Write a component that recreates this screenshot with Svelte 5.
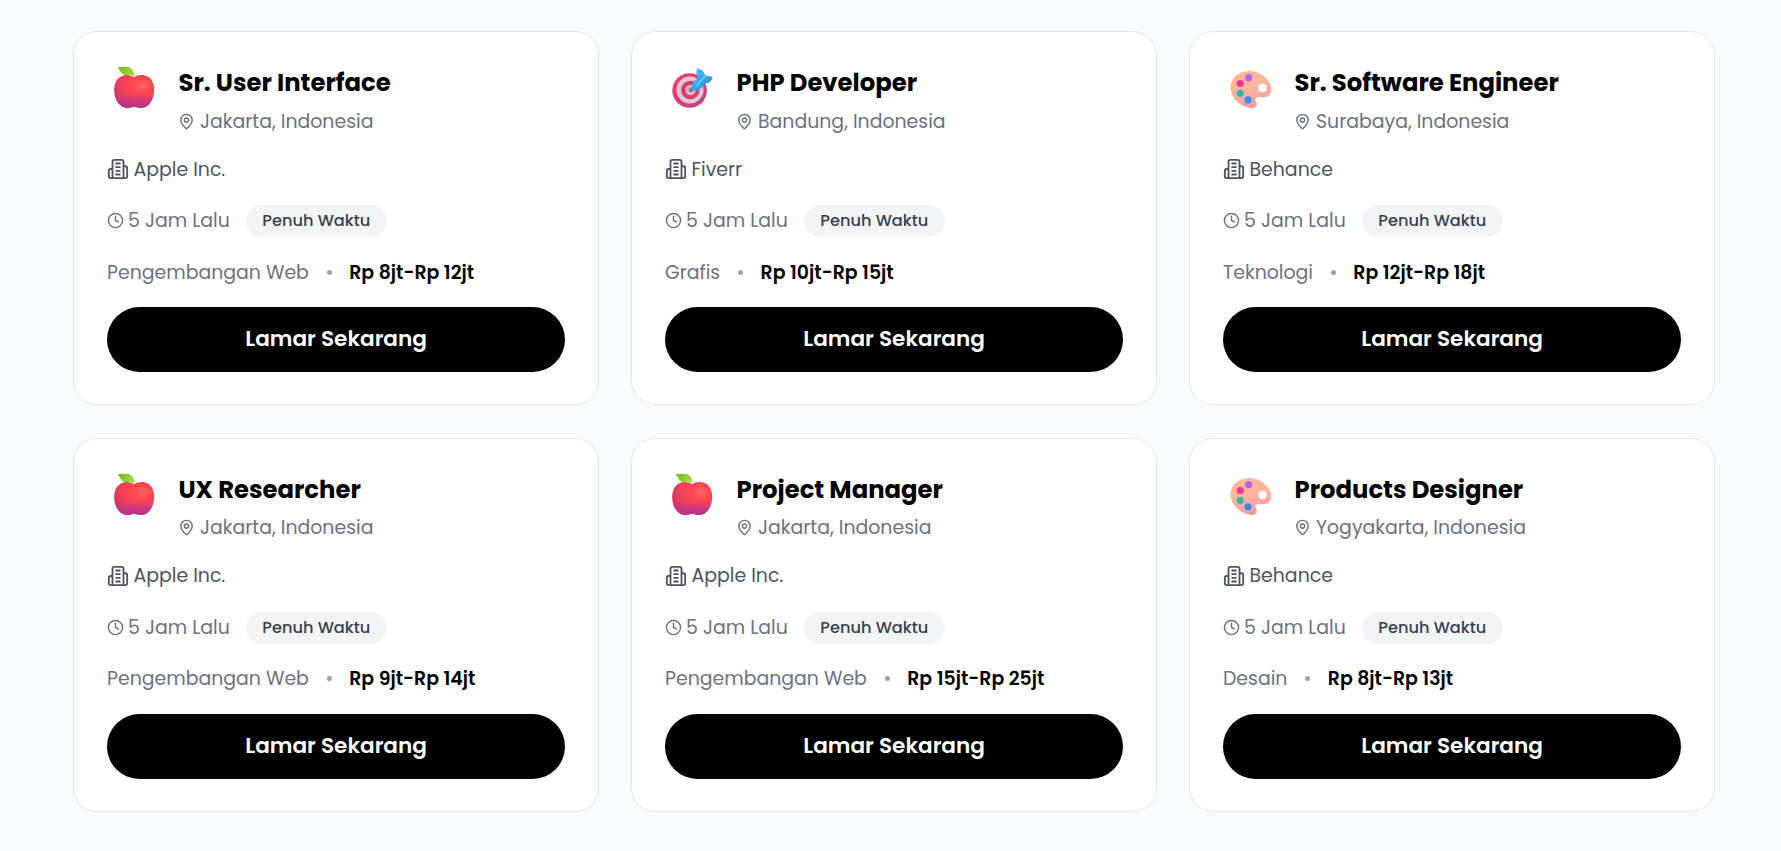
<script>
  const jobs = [
    { title: 'Sr. User Interface', place: 'Jakarta, Indonesia', company: 'Apple Inc.', logo: 'apple', category: 'Pengembangan Web', pay: 'Rp 8jt-Rp 12jt' },
    { title: 'PHP Developer', place: 'Bandung, Indonesia', company: 'Fiverr', logo: 'target', category: 'Grafis', pay: 'Rp 10jt-Rp 15jt' },
    { title: 'Sr. Software Engineer', place: 'Surabaya, Indonesia', company: 'Behance', logo: 'palette', category: 'Teknologi', pay: 'Rp 12jt-Rp 18jt' },
    { title: 'UX Researcher', place: 'Jakarta, Indonesia', company: 'Apple Inc.', logo: 'apple', category: 'Pengembangan Web', pay: 'Rp 9jt-Rp 14jt' },
    { title: 'Project Manager', place: 'Jakarta, Indonesia', company: 'Apple Inc.', logo: 'apple', category: 'Pengembangan Web', pay: 'Rp 15jt-Rp 25jt' },
    { title: 'Products Designer', place: 'Yogyakarta, Indonesia', company: 'Behance', logo: 'palette', category: 'Desain', pay: 'Rp 8jt-Rp 13jt' }
  ];
  const appleShape = 'M27 14.2C31 11.3 37 11.2 41 13.6C45.5 16.4 47.3 22 47.2 27C47.1 36.5 42 45 34 45C31 45 29.6 43.7 27.3 43.7C25 43.7 23.5 45 20.5 45C12.5 45 7.4 36.5 7.2 28C7.1 21 9.3 16 13.5 13.7C17.5 11.3 23 11.5 27 14.2Z';
</script>

<svg class="defs" width="0" height="0" aria-hidden="true">
  <defs>
    <radialGradient id="appleRed" cx=".72" cy=".32" r=".8">
      <stop offset="0" stop-color="#ff6268" /><stop offset=".28" stop-color="#ff474e" /><stop offset=".7" stop-color="#ef3f59" /><stop offset="1" stop-color="#c8395b" />
    </radialGradient>
    <linearGradient id="appleBase" x2="0" y2="1">
      <stop offset=".55" stop-color="#b73295" stop-opacity="0" /><stop offset="1" stop-color="#b43394" />
    </linearGradient>
    <linearGradient id="leaf" x2="1" y2=".4"><stop offset="0" stop-color="#6eb52b" /><stop offset="1" stop-color="#a5dc3a" /></linearGradient>
    <linearGradient id="skin" x2=".4" y2="1"><stop offset="0" stop-color="#ffb88e" /><stop offset=".6" stop-color="#ffb4a2" /><stop offset="1" stop-color="#f79aa0" /></linearGradient>
    <linearGradient id="ring" x2=".5" y2="1"><stop offset="0" stop-color="#f53b66" /><stop offset="1" stop-color="#c8417f" /></linearGradient>
    <linearGradient id="dart" x2="1" y2="1"><stop offset="0" stop-color="#4ccbff" /><stop offset="1" stop-color="#2584dc" /></linearGradient>
  </defs>
</svg>

<main>
  {#each jobs as job}
    <article>
      <header>
        <svg class="logo" viewBox="0 0 54 54">
          {#if job.logo === 'apple'}
            <path d={appleShape} fill="url(#appleRed)" />
            <path d={appleShape} fill="url(#appleBase)" />
            <path d="M10.3 4.3C14 3.700 18 3.600 21.500 4.100C25.500 5.500 27.500 9 27.600 13.300C25 12.300 22 11.800 18.500 12.300C13.500 11.500 13.600 7 10.300 4.300Z" fill="url(#leaf)" />
          {:else if job.logo === 'target'}
            <circle cx="24.6" cy="27.5" r="17.3" fill="url(#ring)" />
            <circle cx="25" cy="27" r="13.5" fill="#dfc9dc" />
            <circle cx="25.3" cy="27" r="9.3" fill="#dd3c6b" />
            <circle cx="25.5" cy="27" r="5.3" fill="#d2b8cc" />
            <circle cx="26" cy="26.8" r="2.3" fill="#946f94" />
            <path d="M28 27C25 25 26 21.500 30 17.500L33 14.500L31.300 10L32 5L37.500 7.500L40.500 12.500L46.500 13.500L47.500 16L44 19.800L40 21L36.500 24.500C33.500 27.500 30.500 28.700 28 27Z" fill="url(#dart)" />
            <path d="M31.500 23L40.500 12.500" stroke="#5fd0ff" stroke-width="1.600" stroke-linecap="round" />
          {:else}
            <g transform="translate(.6 0)">
              <path fill-rule="evenodd" d="M24 8.2C34 7.300 44 14 47 22C49.200 28.500 46 34.300 40 34.300H34.500C31.500 34.300 31.200 36.500 32.500 38.500C34.800 42.500 31.500 45.600 27 45C16 43.500 7.200 35 7 24.500C6.900 15.500 14 9 24 8.200ZM39 20.700A4.300 4.300 0 1 0 39 29.300A4.300 4.300 0 1 0 39 20.700Z" fill="url(#skin)" />
              <circle cx="25" cy="14.7" r="3.6" fill="#b563ea" />
              <circle cx="16.6" cy="20.5" r="3.6" fill="#f33395" />
              <circle cx="16.6" cy="30.3" r="3.6" fill="#38b4ae" />
              <circle cx="24.4" cy="36.9" r="3.6" fill="#3d8df3" />
            </g>
          {/if}
        </svg>
        <div>
          <h3>{job.title}</h3>
          <p class="place">
            <svg class="pin" viewBox="0 0 24 24"><path d="M20 10c0 5-5.500 10.200-7.400 11.800a1 1 0 0 1-1.200 0C9.500 20.200 4 15 4 10a8 8 0 0 1 16 0" /><circle cx="12" cy="10" r="3" /></svg>
            <span>{job.place}</span>
          </p>
        </div>
      </header>
      <p class="company">
        <svg viewBox="0 0 24 24"><path d="M6 22V4a2 2 0 0 1 2-2h8a2 2 0 0 1 2 2v18ZM6 12H4a2 2 0 0 0-2 2v6a2 2 0 0 0 2 2h2M18 9h2a2 2 0 0 1 2 2v9a2 2 0 0 1-2 2h-2M10 6h4M10 10h4M10 14h4M10 18h4" /></svg>
        <span>{job.company}</span>
      </p>
      <div class="meta">
        <svg viewBox="0 0 24 24"><circle cx="12" cy="12" r="10" /><path d="M12 6v6l4 2" /></svg>
        <span class="time">5 Jam Lalu</span>
        <span class="pill">Penuh Waktu</span>
      </div>
      <div class="terms">
        <span>{job.category}</span>
        <i></i>
        <b>{job.pay}</b>
      </div>
      <button>Lamar Sekarang</button>
    </article>
  {/each}
</main>

<style>
  :global(body) { background: #f9fafb; overflow: hidden; }
  .defs { position: absolute; }
  main {
    box-sizing: border-box;
    width: 1781px;
    height: 851px;
    padding: 31px 66.2px 0 73.4px;
    display: grid;
    grid-template-columns: repeat(3, 1fr);
    grid-auto-rows: 374px;
    gap: 32.8px 32.6px;
    font-family: Poppins, Inter, sans-serif;
    font-size: 18.9px;
    color: #6b7280;
    background: #f9fafb;
  }
  article {
    box-sizing: border-box;
    padding: 32px 32.6px;
    border: 1px solid #e5e7eb;
    border-radius: 24px;
    background: #fff;
    display: flex;
    flex-direction: column;
  }
  h3, p { margin: 0; }
  h3, span, b { white-space: nowrap; }
  svg { flex: none; fill: none; stroke: currentColor; stroke-width: 2; stroke-linecap: round; stroke-linejoin: round; }
  .logo { width: 54px; height: 54px; margin-top: -1px; stroke: none; }
  header { display: flex; gap: 17.5px; height: 76px; }
  h3 { font-size: 24.3px; font-weight: 700; line-height: 37px; color: #000; }
  .place { display: flex; align-items: center; height: 40px; gap: 4.5px; }
  .pin { width: 17px; height: 17px; }
  .company { display: flex; align-items: center; height: 30px; margin-top: 14px; gap: 4.5px; color: #4b5563; }
  .company svg { width: 22px; height: 22px; }
  .meta { display: flex; align-items: center; height: 32px; margin-top: 21px; }
  .meta svg { width: 17px; height: 17px; margin: 0 4px 1px 0; }
  .time { padding-bottom: 1px; }
  .pill {
    box-sizing: border-box;
    height: 32px;
    width: 141px;
    padding-bottom: 1px;
    margin-left: 16px;
    border-radius: 16px;
    display: flex;
    align-items: center;
    justify-content: center;
    font-size: 16.2px;
    font-weight: 500;
    color: #374151;
    background: #f3f4f6;
  }
  .terms { display: flex; align-items: center; height: 30px; margin-top: 20px; }
  .terms i { width: 5px; height: 5px; border-radius: 50%; background: #9ca3af; margin: 0 17.7px; }
  .terms b { font-weight: 600; color: #000; }
  button {
    height: 65px;
    margin-top: 20px;
    padding: 0 0 2px;
    border: 0;
    border-radius: 33px;
    background: #000;
    color: #fff;
    font: 600 21.6px Poppins, Inter, sans-serif;
  }
</style>
